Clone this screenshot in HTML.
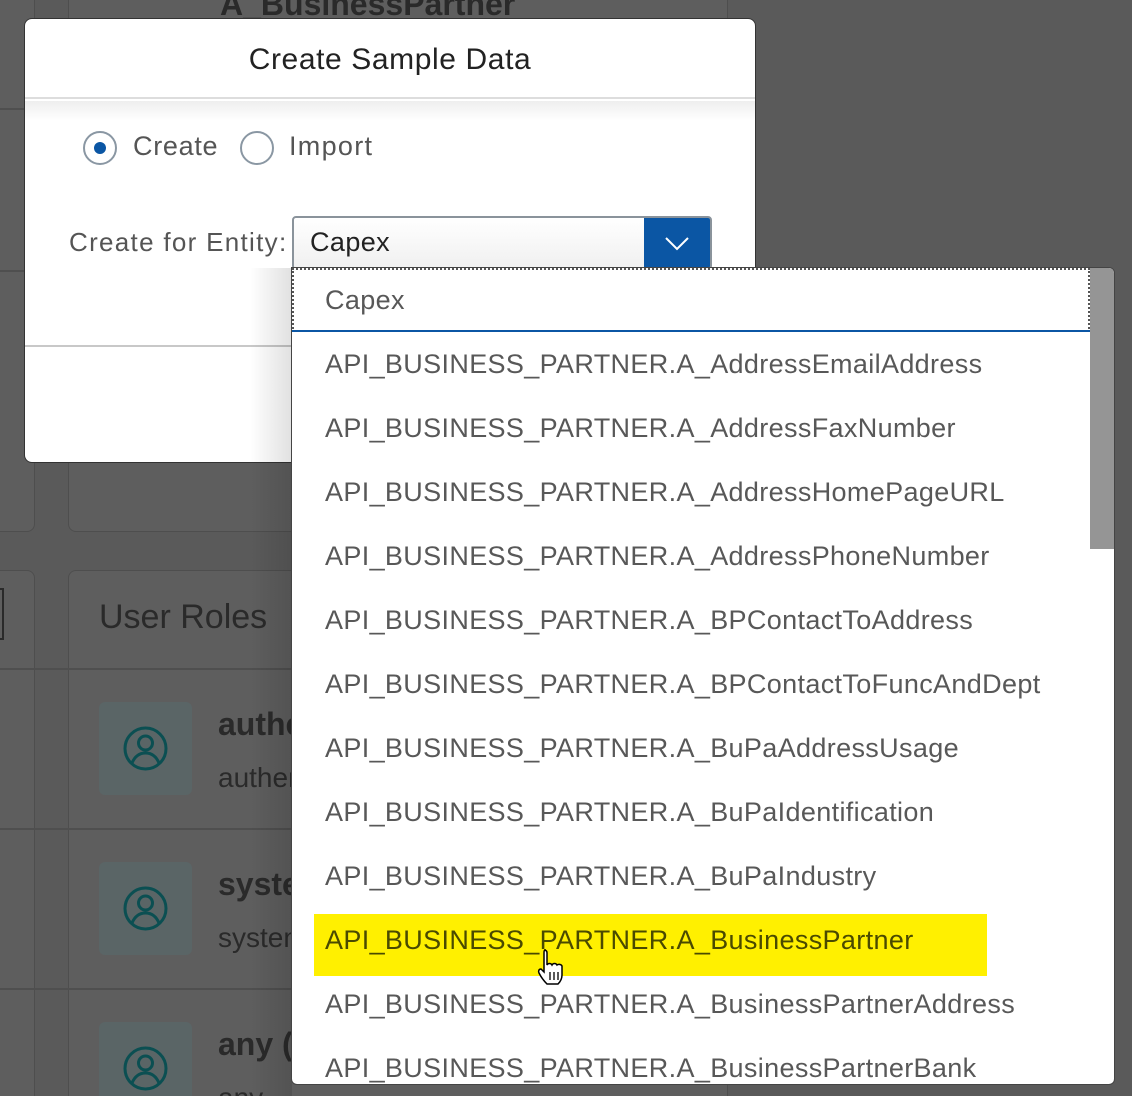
<!DOCTYPE html>
<html><head><meta charset="utf-8"><style>
*{margin:0;padding:0;box-sizing:border-box}
html,body{width:1132px;height:1096px;overflow:hidden}
body{background:#5a5a5a;font-family:"Liberation Sans",sans-serif;position:relative}
.abs{position:absolute}
.card{position:absolute;background:#5e5e5e;border:1px solid #4e4e4e;border-radius:8px}
.sep{position:absolute;height:2px;background:#4f4f4f}
.av{position:absolute;width:93px;height:93px;background:#5a6566;border-radius:6px}
.av svg{position:absolute;left:24px;top:24px}
.dlg{position:absolute;left:24px;top:18px;width:732px;height:445px;background:#fff;border-radius:8px;border:1px solid #333}
.dd{position:absolute;left:291px;top:267px;width:824px;height:818px;background:#fff;border:1px solid #444;border-radius:0 6px 6px 6px;overflow:hidden}
.it{position:absolute;left:33px;font-size:27px;letter-spacing:0.35px;color:#585858;white-space:nowrap}
</style></head><body>
<div class="card" style="left:-10px;top:-10px;width:45px;height:542px"></div>
<div class="card" style="left:68px;top:-10px;width:660px;height:542px"></div>
<div class="sep" style="left:0;top:108px;width:24px"></div>
<div class="sep" style="left:0;top:270px;width:24px"></div>
<div class="abs" style="left:220px;top:-14px;font-size:32px;font-weight:bold;color:#2a2a2a">A_BusinessPartner</div>
<div class="card" style="left:-10px;top:570px;width:45px;height:540px"></div>
<div class="abs" style="left:-4px;top:588px;width:8px;height:52px;border:2px solid #2a2a2a"></div>
<div class="card" style="left:68px;top:570px;width:660px;height:540px"></div>
<div class="abs" style="left:99px;top:598px;font-size:34px;color:#2a2a2a">User Roles</div>
<div class="sep" style="left:0;top:668px;width:300px"></div>
<div class="sep" style="left:0;top:828px;width:300px"></div>
<div class="sep" style="left:0;top:988px;width:300px"></div>
<div class="av" style="left:99px;top:702px"><svg width="45" height="45" viewBox="0 0 45 45" fill="none" stroke="#0b4f52" stroke-width="3"><circle cx="22.5" cy="22.5" r="20.5"/><circle cx="22.5" cy="17" r="7"/><path d="M9 37c3-7 8-10 13.5-10S33 30 36 37"/></svg></div>
<div class="av" style="left:99px;top:862px"><svg width="45" height="45" viewBox="0 0 45 45" fill="none" stroke="#0b4f52" stroke-width="3"><circle cx="22.5" cy="22.5" r="20.5"/><circle cx="22.5" cy="17" r="7"/><path d="M9 37c3-7 8-10 13.5-10S33 30 36 37"/></svg></div>
<div class="av" style="left:99px;top:1022px"><svg width="45" height="45" viewBox="0 0 45 45" fill="none" stroke="#0b4f52" stroke-width="3"><circle cx="22.5" cy="22.5" r="20.5"/><circle cx="22.5" cy="17" r="7"/><path d="M9 37c3-7 8-10 13.5-10S33 30 36 37"/></svg></div>
<div class="abs" style="left:218px;top:706px;font-size:32px;font-weight:bold;color:#2a2a2a">authenticated</div>
<div class="abs" style="left:218px;top:762px;font-size:28px;color:#2a2a2a">authenticated</div>
<div class="abs" style="left:218px;top:866px;font-size:32px;font-weight:bold;color:#2a2a2a">system</div>
<div class="abs" style="left:218px;top:922px;font-size:28px;color:#2a2a2a">system</div>
<div class="abs" style="left:218px;top:1026px;font-size:32px;font-weight:bold;color:#2a2a2a">any (</div>
<div class="abs" style="left:218px;top:1082px;font-size:28px;color:#2a2a2a">any</div>

<div class="dlg">
 <div class="abs" style="left:0;top:0;width:730px;height:80px;border-bottom:2px solid #ddd;text-align:center;font-size:30px;letter-spacing:0.6px;color:#222;line-height:82px">Create Sample Data</div>
 <div class="abs" style="left:0;top:82px;width:730px;height:20px;background:linear-gradient(#eee,#fff)"></div>
 <div class="abs" style="left:58px;top:112px;width:34px;height:34px;border:2px solid #8a97a3;border-radius:50%"><div style="position:absolute;left:9px;top:9px;width:12px;height:12px;border-radius:50%;background:#0b56a4"></div></div>
 <div class="abs" style="left:108px;top:112px;font-size:27px;letter-spacing:0.7px;color:#555">Create</div>
 <div class="abs" style="left:215px;top:112px;width:34px;height:34px;border:2px solid #8a97a3;border-radius:50%"></div>
 <div class="abs" style="left:264px;top:112px;font-size:27px;letter-spacing:1.3px;color:#555">Import</div>
 <div class="abs" style="left:44px;top:208px;font-size:26px;letter-spacing:1.3px;color:#555">Create for Entity:</div>
 <div class="abs" style="left:267px;top:197px;width:420px;height:54px;border:2px solid #8a939b;border-radius:4px;background:linear-gradient(#fff,#f0f0f0);overflow:hidden">
  <div class="abs" style="left:16px;top:9px;font-size:27px;letter-spacing:0.4px;color:#222">Capex</div>
  <div class="abs" style="right:0;top:0;width:66px;height:52px;background:#0b56a4"><svg width="66" height="52"><path d="M22 20l11 11 11-11" stroke="#fff" stroke-width="2" fill="none"/></svg></div>
 </div>
 <div class="abs" style="left:0;top:326px;width:730px;height:2px;background:#c8c8c8"></div>
</div>

<div class="abs" style="left:250px;top:268px;width:42px;height:830px;background:linear-gradient(90deg,rgba(0,0,0,0),rgba(0,0,0,0.12))"></div>
<div class="dd">
 <div class="abs" style="left:0;top:0;width:798px;height:64px;border:2px dotted #555;border-bottom:none"></div>
 <div class="abs" style="left:0;top:62px;width:798px;height:2px;background:#0b56a4"></div>
 <div class="abs" style="left:798px;top:0;width:25px;height:281px;background:#959595"></div>
 <div class="abs" style="left:22px;top:646px;width:673px;height:62px;background:#fff000"></div>
 <div class="it" style="top:17px">Capex</div>
 <div class="it" style="top:81px">API_BUSINESS_PARTNER.A_AddressEmailAddress</div>
 <div class="it" style="top:145px">API_BUSINESS_PARTNER.A_AddressFaxNumber</div>
 <div class="it" style="top:209px">API_BUSINESS_PARTNER.A_AddressHomePageURL</div>
 <div class="it" style="top:273px">API_BUSINESS_PARTNER.A_AddressPhoneNumber</div>
 <div class="it" style="top:337px">API_BUSINESS_PARTNER.A_BPContactToAddress</div>
 <div class="it" style="top:401px">API_BUSINESS_PARTNER.A_BPContactToFuncAndDept</div>
 <div class="it" style="top:465px">API_BUSINESS_PARTNER.A_BuPaAddressUsage</div>
 <div class="it" style="top:529px">API_BUSINESS_PARTNER.A_BuPaIdentification</div>
 <div class="it" style="top:593px">API_BUSINESS_PARTNER.A_BuPaIndustry</div>
 <div class="it" style="top:657px;color:#4a4a00">API_BUSINESS_PARTNER.A_BusinessPartner</div>
 <div class="it" style="top:721px">API_BUSINESS_PARTNER.A_BusinessPartnerAddress</div>
 <div class="it" style="top:785px">API_BUSINESS_PARTNER.A_BusinessPartnerBank</div>
 <svg class="abs" style="left:244px;top:680px" width="32" height="38" viewBox="0 0 32 38"><path d="M8 2c2 0 3 1 3 3v12c1-2 4-2 5 0 1-2 4-2 5 0 1-1 4-1 5 1v9c0 4-2 7-4 9H11c-3-3-6-7-8-11-1-2 0-4 2-4l3 3V5c0-2 0-3 2-3z" fill="#fff" stroke="#000" stroke-width="1.5"/><path d="M14 24v8M18 24v8M22 24v8" stroke="#000" stroke-width="1.3"/></svg>
</div>
</body></html>
